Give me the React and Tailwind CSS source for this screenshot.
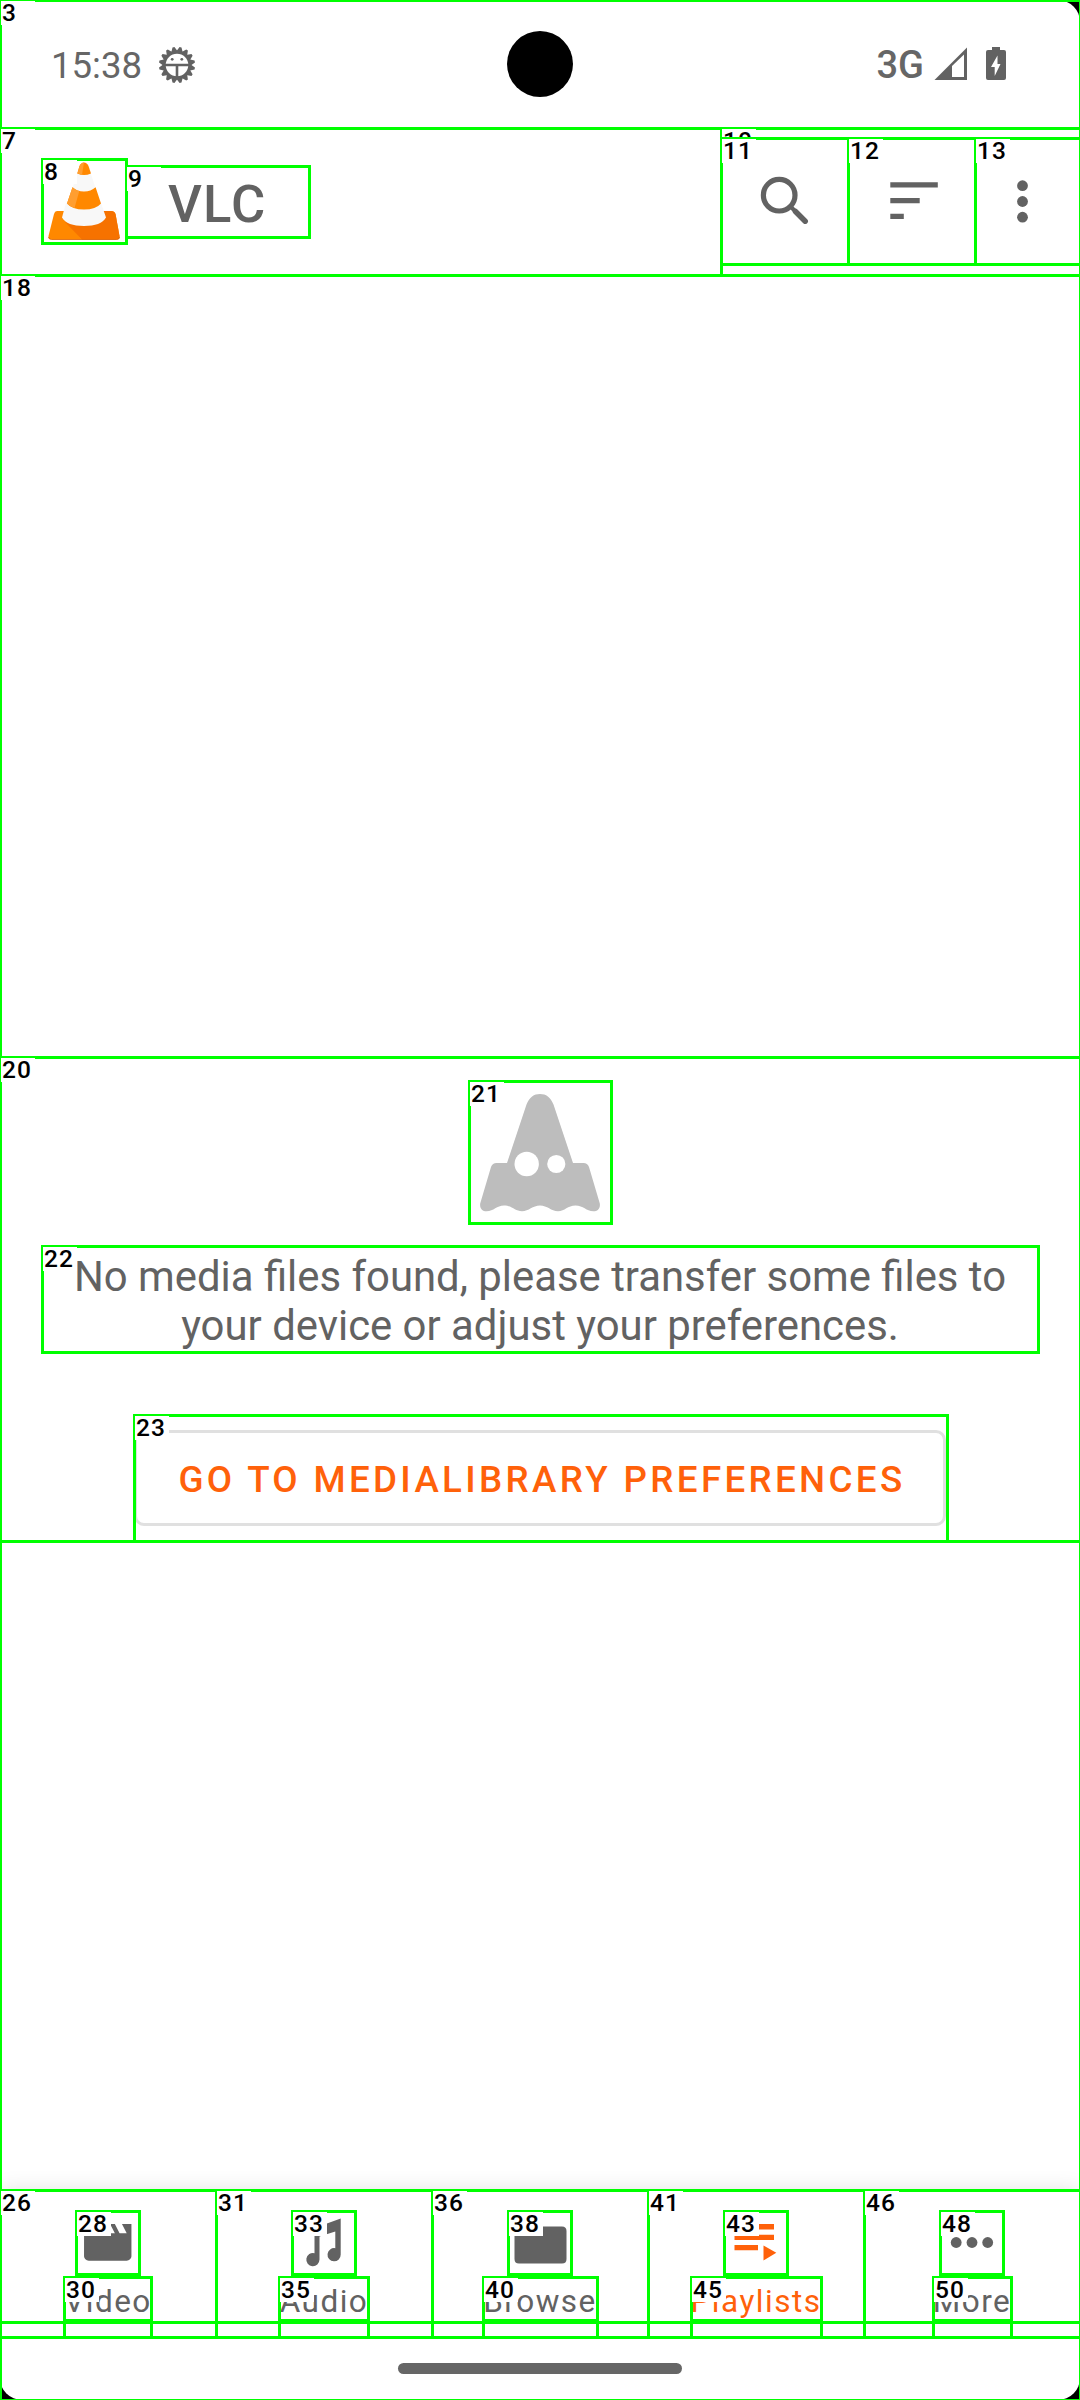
const GRAY = "#626262";

function DebugIcon() {
  const teeth = Array.from({ length: 16 }, (_, i) => i * 22.5 + 11.25);
  return (
    <svg className="ml-[15px] size-[40px]" viewBox="157 46 40 40">
      {teeth.map((a) => (
        <path key={a} d="M173.6 52 L176 46.9 H178 L180.4 52 Z" fill={GRAY} transform={`rotate(${a} 177 65)`} />
      ))}
      <circle cx="177" cy="65" r="12.8" fill="white" stroke={GRAY} strokeWidth="3" />
      <path d="M164 65 H190 M177 65 V78" stroke={GRAY} strokeWidth="2.6" />
      <circle cx="172.2" cy="59.3" r="1.4" fill={GRAY} />
      <circle cx="181.8" cy="59.3" r="1.4" fill={GRAY} />
    </svg>
  );
}

function StatusBar() {
  return (
    <header className="flex h-[128px] items-center justify-between pl-[51px] pr-[70px] text-[#666666]">
      <div className="flex w-[420px] items-center pt-[4px]">
        <span className="text-[36.6px] leading-[42px]">15:38</span>
        <DebugIcon />
      </div>
      <div className="mr-auto ml-[36px] size-[66px] rounded-full bg-black" />
      <div className="flex items-center">
        <span className="mr-[7px] pt-[2px] text-[38px] font-medium leading-[42px]">3G</span>
        <svg className="h-[36px] w-[79px]" viewBox="931 46 79 36">
          <path d="M934.5 80 L967 47.5 V80 Z" fill={GRAY} />
          <path d="M952 66 L964 54.5 V77 H952 Z" fill="white" />
          <path d="M992 47 H1000 V50 H1004 Q1006 50 1006 52 V78 Q1006 80 1004 80 H988 Q986 80 986 78 V52 Q986 50 988 50 H992 Z" fill={GRAY} />
          <path d="M997.5 55.5 L991 67 H994.7 V76 L1000.5 64 H997.5 Z" fill="white" />
        </svg>
      </div>
    </header>
  );
}

function ConeLogo() {
  return (
    <svg className="size-[85px]" viewBox="42 159 85 85">
      <path d="M57 211 H111 Q114.500 211 115.500 214 L119.500 236 Q120 239.500 116.500 239.500 H51.500 Q48 239.500 48.500 236 L54 214 Q54.800 211 57 211 Z" fill="#ff8800" />
      <path d="M65 222 L82 239.500 H116.500 Q120 239.500 119.500 236 L115.500 214 Q114.500 211 111 211 H104 Z" fill="#f67200" />
      <path d="M48.500 237 Q49 239.500 51.500 239.500 H116.500 Q119.500 239.500 119.500 237" fill="none" stroke="#d9650a" strokeWidth="0.8" />
      <path d="M66 203 L62 217.500 Q67 226 84 226 Q101 226 106 217.500 L101 203 Z" fill="#f8f8f8" />
      <path d="M77.300 174 L72.500 188 Q77 191.500 84 191.500 Q91 191.500 95.500 188 L91 174 Z" fill="#f8f8f8" />
      <path d="M72.500 187.300 L67 203.500 Q72 209.500 84 209.500 Q96 209.500 101 203.500 L95.600 187.300 Q91 191.500 84 191.500 Q77 191.500 72.500 187.300 Z" fill="#ff8800" />
      <path d="M72.500 187.300 L67 203.500 Q69.500 206.500 74.500 208 L79.300 191 Q75 190 72.500 187.300 Z" fill="#ff9e30" />
      <path d="M77.300 173.500 L79.500 166 Q81 162.500 84 162.500 Q87 162.500 88.500 166 L91 173.500 Q84 176.500 77.300 173.500 Z" fill="#ff8800" />
      <path d="M77.300 173.500 L79.500 166 Q81 162.500 84 162.500 L82 174.800 Z" fill="#ff9e30" />
    </svg>
  );
}

function Toolbar() {
  return (
    <div className="flex h-[147px] items-center pl-[42px]">
      <ConeLogo />
      <h1 className="ml-[41px] pt-[4px] text-[52.5px] font-medium leading-[62px] tracking-[1.2px] text-[#626262]">VLC</h1>
      <div className="ml-auto flex h-[127px] self-center">
        <button aria-label="Search" className="w-[127px]">
          <svg className="h-[127px] w-[127px]" viewBox="721 138 127 127" fill="none" stroke={GRAY}>
            <circle cx="779.200" cy="195.200" r="15.800" strokeWidth="5.200" />
            <path d="M790.500 206.500 L797 213" strokeWidth="4" />
            <path d="M795.500 211.500 L805.200 221.200" strokeWidth="5.500" strokeLinecap="round" />
          </svg>
        </button>
        <button aria-label="Sort" className="w-[127px]">
          <svg className="h-[127px] w-[127px]" viewBox="848 138 127 127" fill={GRAY}>
            <path d="M890.300 182.200 h47.500 v5.400 h-47.500z M890.300 197.900 h29.400 v5.400 h-29.400z M890.300 213.700 h13.500 v5.400 h-13.500z" />
          </svg>
        </button>
        <button aria-label="Options" className="w-[105px]">
          <svg className="h-[127px] w-[105px]" viewBox="975 138 105 127" fill={GRAY}>
            <circle cx="1022.500" cy="185.700" r="5.400" />
            <circle cx="1022.500" cy="201.500" r="5.400" />
            <circle cx="1022.500" cy="217.200" r="5.400" />
          </svg>
        </button>
      </div>
    </div>
  );
}

function EmptyState() {
  return (
    <main className="flex h-[1915px] flex-col items-center pt-[806px]">
      <svg className="h-[143px] w-[143px]" viewBox="19 41 143 143">
        <path
          d="M57 123 L76.500 64.500 C79.500 57 84 54 90 54 C96 54 100.500 57 103.500 64.500 L123 123 H133.500 Q137.500 123.200 139 127 L149.800 163.500 C150.500 168.500 147.500 171.200 143.500 171.200 C136 171.200 133.500 165.500 125.500 165.500 C117.500 165.500 115 171.200 108 171.200 C101 171.200 97.500 165.500 90 165.500 C82.500 165.500 79 171.200 72 171.200 C65 171.200 62.500 165.500 54 165.500 C46.500 165.500 44 171.200 36.500 171.200 C32.500 171.200 29.500 168.500 30.200 163.500 L41 127 Q42.500 123.200 46.500 123 Z"
          fill="#bdbdbd"
        />
        <circle cx="76.700" cy="124" r="12.200" fill="white" />
        <circle cx="106.300" cy="124" r="9.100" fill="white" />
      </svg>
      <p className="mt-[28px] w-[996px] whitespace-nowrap text-center text-[41.87px] leading-[49px] text-[#626262]">
        No media files found, please transfer some files to
        <br />
        your device or adjust your preferences.
      </p>
      <button className="mt-[80px] h-[96px] w-[812px] whitespace-nowrap rounded-[10px] border-[3px] border-[#e0e0e0] pl-[4px] pt-[2px] text-[36.75px] font-medium leading-[43px] tracking-[3.33px] text-[#ff610a]">
        GO TO MEDIALIBRARY PREFERENCES
      </button>
    </main>
  );
}

const TABS = [
  {
    label: "Video",
    icon: (
      <path
        transform="translate(2.3 3.82) scale(2.37 2.294)"
        d="M18 4l2 4h-3l-2-4h-2l2 4h-3l-2-4H8l2 4H7L5 4H4c-1.1 0-1.99.9-1.99 2L2 18c0 1.1.9 2 2 2h16c1.1 0 2-.9 2-2V4h-4z"
      />
    ),
  },
  {
    label: "Audio",
    icon: (
      <path d="M21.500 17 L47.700 7.500 V43.500 A6.600 6.600 0 1 1 42.300 37.200 V20.500 L26.500 25.500 V48.600 A6.600 6.600 0 1 1 21.500 42.200 Z" />
    ),
  },
  {
    label: "Browse",
    icon: <path d="M10 10 H25 L31 15.500 H53 Q57.500 15.500 57.500 20 V48 Q57.500 52.500 53 52.500 H10 Q5.500 52.500 5.500 48 V15 Q5.500 10 10 10 Z" />,
  },
  {
    label: "Playlists",
    active: true,
    icon: <path d="M9.500 13 H49 V18.500 H9.500Z M9.500 23.700 H49 V29 H9.500Z M9.500 34 H33 V39.200 H9.500Z M38.500 34.500 L51.300 41.800 L38.500 49.500Z" />,
  },
  {
    label: "More",
    icon: (
      <>
        <circle cx="15.200" cy="31.500" r="5.400" />
        <circle cx="31.000" cy="31.500" r="5.400" />
        <circle cx="46.700" cy="31.500" r="5.400" />
      </>
    ),
  },
];

function BottomNav() {
  return (
    <nav className="grid h-[147px] grid-cols-5 bg-white shadow-[0_0_20px_rgba(0,0,0,0.12)] [clip-path:inset(-30px_0_0_0)]">
      {TABS.map((tab) => (
        <div
          key={tab.label}
          className={`flex flex-col items-center pt-[21px] ${tab.active ? "text-[#ff610a]" : "text-[#626262]"}`}
        >
          <svg className="size-[63px]" viewBox="0 0 63 63" fill="currentColor">
            {tab.icon}
          </svg>
          <span className="mt-[9px] text-[31.5px] leading-[37px] tracking-[1.5px]">{tab.label}</span>
        </div>
      ))}
    </nav>
  );
}

// [label, left, top, right, bottom] measured at the centre of each outline
const REGIONS = [
  ["", 0, 0, 1080, 2400],
  ["3", 0, 0, 1080, 128],
  ["7", 0, 128, 1080, 275],
  ["8", 42, 159, 126, 243],
  ["9", 126, 166, 309, 237],
  ["10", 721, 128, 1080, 275],
  ["11", 721, 138, 848, 264],
  ["12", 848, 138, 975, 264],
  ["13", 975, 138, 1080, 264],
  ["18", 0, 275, 1080, 2400],
  ["20", 0, 1057, 1080, 1541],
  ["21", 469, 1081, 611, 1223],
  ["22", 42, 1246, 1038, 1352],
  ["23", 134, 1415, 947, 1541],
  ["", 0, 2190, 1080, 2322],
  ["26", 0, 2190, 216, 2337],
  ["28", 76, 2211, 139, 2274],
  ["", 64, 2277, 151, 2337],
  ["30", 64, 2277, 151, 2320],
  ["31", 216, 2190, 432, 2337],
  ["33", 292, 2211, 355, 2274],
  ["", 279, 2277, 368, 2337],
  ["35", 279, 2277, 368, 2320],
  ["36", 432, 2190, 648, 2337],
  ["38", 508, 2211, 571, 2274],
  ["", 483, 2277, 597, 2337],
  ["40", 483, 2277, 597, 2320],
  ["41", 648, 2190, 864, 2337],
  ["43", 724, 2211, 787, 2274],
  ["", 691, 2277, 821, 2337],
  ["45", 691, 2277, 821, 2320],
  ["46", 864, 2190, 1080, 2337],
  ["48", 940, 2211, 1003, 2274],
  ["", 933, 2277, 1011, 2337],
  ["50", 933, 2277, 1011, 2320],
];

function RegionOverlay() {
  return (
    <div className="pointer-events-none absolute inset-0 overflow-hidden">
      {REGIONS.map(([label, l, t, r, b], i) => (
        <div
          key={i}
          className="absolute border-[3px] border-[#00ff00]"
          style={{ left: l - 1, top: t - 1, width: r - l + 3, height: b - t + 3 }}
        >
          {label && (
            <span className="absolute -left-px -top-px h-[24px] w-[34px] whitespace-nowrap bg-white pl-px text-[24.5px] font-medium leading-[24px] tracking-[1px] text-black">
              {label}
            </span>
          )}
        </div>
      ))}
    </div>
  );
}

export default function App() {
  return (
    <div className="h-[2400px] w-[1080px] overflow-hidden bg-black">
      <div className="relative h-full w-full overflow-hidden bg-black font-['Roboto',sans-serif]">
        <div className="h-full overflow-hidden rounded-bl-[22px] rounded-r-[22px] bg-white">
          <StatusBar />
          <Toolbar />
          <EmptyState />
          <BottomNav />
          <div className="flex h-[63px] items-center justify-center">
            <div className="h-[11px] w-[284px] rounded-full bg-[#666666]" />
          </div>
        </div>
        <RegionOverlay />
      </div>
    </div>
  );
}
